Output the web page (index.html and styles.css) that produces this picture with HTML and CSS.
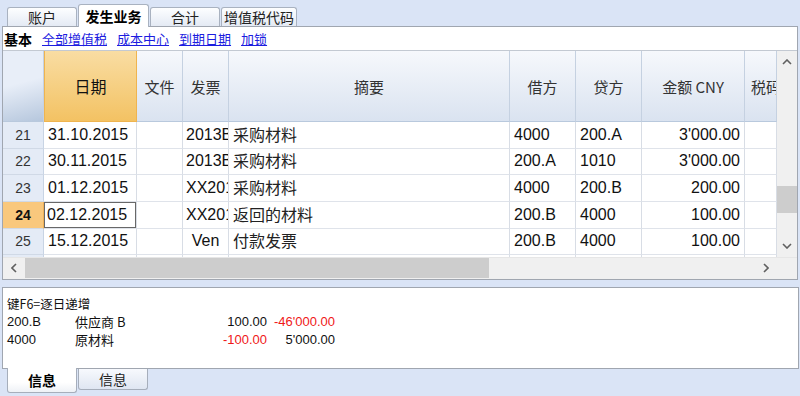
FILE: index.html
```html
<!DOCTYPE html>
<html lang="zh">
<head>
  <meta charset="UTF-8">
  <title>发生业务</title>
  <link rel="stylesheet" href="styles.css">
</head>
<body>

  <div class="tabs-top">
    <div class="tab">账户</div>
    <div class="tab active">发生业务</div>
    <div class="tab">合计</div>
    <div class="tab wide">增值税代码</div>
  </div>

  <div class="panel main">
    <div class="toolbar">
      <span class="view-current">基本</span>
      <a href="#">全部增值税</a>
      <a href="#">成本中心</a>
      <a href="#">到期日期</a>
      <a href="#">加锁</a>
    </div>

    <div class="grid-wrap">
      <div class="grid">
        <div class="row head">
          <div class="cell rownum"></div>
          <div class="cell date">日期</div>
          <div class="cell">文件</div>
          <div class="cell">发票</div>
          <div class="cell">摘要</div>
          <div class="cell">借方</div>
          <div class="cell">贷方</div>
          <div class="cell">金额 CNY</div>
          <div class="cell clip">税码</div>
        </div>

        <div class="row">
          <div class="cell rownum">21</div>
          <div class="cell">31.10.2015</div>
          <div class="cell"></div>
          <div class="cell clip">2013B</div>
          <div class="cell cjk">采购材料</div>
          <div class="cell">4000</div>
          <div class="cell">200.A</div>
          <div class="cell num">3'000.00</div>
          <div class="cell"></div>
        </div>
        <div class="row">
          <div class="cell rownum">22</div>
          <div class="cell">30.11.2015</div>
          <div class="cell"></div>
          <div class="cell clip">2013B</div>
          <div class="cell cjk">采购材料</div>
          <div class="cell">200.A</div>
          <div class="cell">1010</div>
          <div class="cell num">3'000.00</div>
          <div class="cell"></div>
        </div>
        <div class="row">
          <div class="cell rownum">23</div>
          <div class="cell">01.12.2015</div>
          <div class="cell"></div>
          <div class="cell clip">XX201</div>
          <div class="cell cjk">采购材料</div>
          <div class="cell">4000</div>
          <div class="cell">200.B</div>
          <div class="cell num">200.00</div>
          <div class="cell"></div>
        </div>
        <div class="row current">
          <div class="cell rownum">24</div>
          <div class="cell selected">02.12.2015</div>
          <div class="cell"></div>
          <div class="cell clip">XX201</div>
          <div class="cell cjk">返回的材料</div>
          <div class="cell">200.B</div>
          <div class="cell">4000</div>
          <div class="cell num">100.00</div>
          <div class="cell"></div>
        </div>
        <div class="row">
          <div class="cell rownum">25</div>
          <div class="cell">15.12.2015</div>
          <div class="cell"></div>
          <div class="cell center">Ven</div>
          <div class="cell cjk">付款发票</div>
          <div class="cell">200.B</div>
          <div class="cell">4000</div>
          <div class="cell num">100.00</div>
          <div class="cell"></div>
        </div>
        <div class="row">
          <div class="cell rownum"></div>
          <div class="cell"></div>
          <div class="cell"></div>
          <div class="cell"></div>
          <div class="cell"></div>
          <div class="cell"></div>
          <div class="cell"></div>
          <div class="cell"></div>
          <div class="cell"></div>
        </div>
      </div>

      <div class="vscroll">
        <div class="arrow">
          <svg width="10" height="6" viewBox="0 0 10 6"><polyline points="1,5 5,1 9,5" fill="none" stroke="#606060" stroke-width="1.6"/></svg>
        </div>
        <div class="v-before"></div>
        <div class="v-thumb"></div>
        <div class="v-after"></div>
        <div class="arrow">
          <svg width="10" height="6" viewBox="0 0 10 6"><polyline points="1,1 5,5 9,1" fill="none" stroke="#606060" stroke-width="1.6"/></svg>
        </div>
      </div>
    </div>

    <div class="hscroll">
      <div class="arrow">
        <svg width="6" height="10" viewBox="0 0 6 10"><polyline points="5,1 1,5 5,9" fill="none" stroke="#606060" stroke-width="1.6"/></svg>
      </div>
      <div class="h-thumb"></div>
      <div class="h-after"></div>
      <div class="arrow">
        <svg width="6" height="10" viewBox="0 0 6 10"><polyline points="1,1 5,5 1,9" fill="none" stroke="#606060" stroke-width="1.6"/></svg>
      </div>
      <div class="corner"></div>
    </div>
  </div>

  <div class="panel info">
    <div class="hint">键F6=逐日递增</div>
    <div class="info-line">
      <span>200.B</span>
      <span class="cjk">供应商 B</span>
      <span class="num">100.00</span>
      <span class="num neg">-46'000.00</span>
    </div>
    <div class="info-line">
      <span>4000</span>
      <span class="cjk">原材料</span>
      <span class="num neg">-100.00</span>
      <span class="num">5'000.00</span>
    </div>
  </div>

  <div class="tabs-bottom">
    <div class="btab active">信息</div>
    <div class="btab">信息</div>
  </div>

</body>
</html>
```

FILE: styles.css
```css
body {
  margin: 0;
  width: 800px;
  height: 396px;
  overflow: hidden;
  background: #dae4f6;
  font-family: "Liberation Sans", "Noto Sans CJK SC", sans-serif;
  color: #111;
}

/* onglets du haut */
.tabs-top {
  display: flex;
  align-items: flex-end;
  height: 26px;
  padding-left: 7px;
}

.tab {
  box-sizing: border-box;
  width: 70px;
  height: 19px;
  margin-right: 1px;
  border: 1px solid #a9b2c0;
  border-bottom: none;
  border-radius: 3px 3px 0 0;
  background: linear-gradient(#fdfeff, #e4eaf4);
  font: 14px/18px "Noto Sans CJK SC", sans-serif;
  text-align: center;
  color: #222;
}

.tab.wide {
  width: 76px;
}

.tab.active {
  position: relative;
  z-index: 1;
  width: 71px;
  height: 23px;
  margin-bottom: -1px;
  background: #fff;
  font-weight: bold;
  color: #000;
  line-height: 22px;
}

.panel {
  background: #fff;
  border: 1px solid #a0a6b0;
}

.main {
  margin: 0 2px;
  height: 254px;
  box-sizing: border-box;
}

.toolbar {
  display: flex;
  align-items: center;
  gap: 10px;
  height: 23px;
  padding-left: 1px;
  font: 13px "Noto Sans CJK SC", sans-serif;
}

.toolbar a {
  color: #1c1ce0;
}

.view-current {
  font-size: 14px;
  font-weight: bold;
  color: #000;
}

.grid-wrap {
  display: flex;
  height: 207px;
  overflow: hidden;
  border-top: 1px solid #c3c9d2;
  box-sizing: border-box;
}

.grid {
  width: 774px;
}

.row {
  display: grid;
  grid-template-columns: 41px 93px 46px 46px 281px 66px 66px 103px 32px;
  height: 26.67px;
}

.cell {
  box-sizing: border-box;
  display: flex;
  align-items: center;
  padding: 0 4px;
  border-right: 1px solid #d8dde5;
  border-bottom: 1px solid #dfe3ea;
  font-size: 16px;
  line-height: 1;
  white-space: nowrap;
  overflow: hidden;
}

.cell.clip {
  padding-left: 3px;
}

.cell.center {
  justify-content: center;
}

.cell.num {
  justify-content: flex-end;
}

.cell.cjk {
  padding-bottom: 2px;
  font-family: "Noto Sans CJK SC", sans-serif;
  color: #222;
}

.row.head {
  height: 71px;
}

.row.head .cell {
  justify-content: center;
  padding-bottom: 0;
  background: linear-gradient(#f6f8fc, #dae3f0);
  border-right-color: #c5d1e1;
  border-bottom-color: #b9c9dd;
  font: 15px/1 "Noto Sans CJK SC", sans-serif;
  color: #333;
}

.row.head .cell.clip {
  justify-content: flex-start;
  padding-left: 6px;
}

.row.head .cell.rownum {
  background: linear-gradient(165deg, #e8eef8 45%, #b6c7dd);
}

.row.head .cell.date {
  background: linear-gradient(#f9dda3, #f3c263);
  border: 1px solid #efb44f;
  border-top: none;
  color: #111;
  font-size: 16px;
}

.cell.rownum {
  justify-content: center;
  padding: 0;
  background: #e4ebf6;
  border-right-color: #c8d4e4;
  border-bottom-color: #d0d9e6;
  font-size: 14px;
  color: #333;
}

.row.current .cell.rownum {
  background: #f9c87d;
  border-right-color: #eeb058;
  font-weight: bold;
  color: #111;
}

.cell.selected {
  box-shadow: inset 0 0 0 1px #686868;
  padding-left: 3px;
}

/* barres de défilement */
.vscroll {
  display: flex;
  flex-direction: column;
  width: 20px;
  background: #f0f0f0;
}

.vscroll .arrow {
  height: 22px;
}

.arrow {
  display: flex;
  align-items: center;
  justify-content: center;
}

.v-before {
  height: 113px;
}

.v-thumb {
  height: 27px;
  background: #cdcdcd;
}

.v-after {
  flex: 1;
}

.hscroll {
  display: flex;
  height: 22px;
  background: #f0f0f0;
  border-top: 1px solid #e6e6e6;
  box-sizing: border-box;
}

.hscroll .arrow {
  width: 22px;
  height: 20px;
}

.h-thumb {
  width: 464px;
  height: 20px;
  background: #cdcdcd;
}

.h-after {
  flex: 1;
}

.corner {
  width: 20px;
}

/* panneau info */
.info {
  margin: 7px 1px 0 2px;
  height: 82px;
  box-sizing: border-box;
  padding: 7px 4px 0;
  font-size: 13px;
  line-height: 18px;
}

.hint {
  font: 12.5px/18px "Noto Sans CJK SC", sans-serif;
}

.info-line {
  display: grid;
  grid-template-columns: 68px 120px 72px 68px;
}

.info-line .cjk {
  font-family: "Noto Sans CJK SC", sans-serif;
}

.info-line .num {
  text-align: right;
}

.neg {
  color: #f01818;
}

.tabs-bottom {
  display: flex;
  align-items: flex-start;
  padding-left: 7px;
}

.btab {
  box-sizing: border-box;
  width: 70px;
  height: 21px;
  margin-right: 1px;
  border: 1px solid #a6aebb;
  border-top: none;
  border-radius: 0 0 3px 3px;
  background: linear-gradient(#f7f9fd, #dfe6f2);
  font: 14px/20px "Noto Sans CJK SC", sans-serif;
  text-align: center;
  color: #222;
}

.btab.active {
  position: relative;
  height: 25px;
  margin-top: -1px;
  background: linear-gradient(#fff 60%, #eef1f6);
  font-weight: bold;
  color: #000;
  line-height: 25px;
}
```
